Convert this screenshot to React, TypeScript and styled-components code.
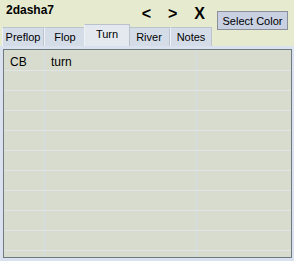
import * as React from 'react';
import styled, { createGlobalStyle } from 'styled-components';

const GlobalStyle = createGlobalStyle`
  html, body {
    margin: 0;
    padding: 0;
    background: #e6ebcf;
  }
`;

const Window = styled.div`
  width: 294px;
  height: 261px;
  display: flex;
  flex-direction: column;
  background: #e6ebcf;
  font-family: "Liberation Sans", Arial, sans-serif;
  font-size: 11px;
  color: #000;
  overflow: hidden;
`;

const Header = styled.div`
  display: grid;
  grid-template-columns: 214px 1fr;
  grid-template-rows: 24px 22px;
`;

const TitleRow = styled.div`
  grid-column: 1;
  grid-row: 1;
  display: flex;
  align-items: flex-start;
  padding: 3px 9px 0 6px;
`;

const Title = styled.div`
  font-size: 12px;
  font-weight: bold;
  line-height: 14px;
`;

const NavGroup = styled.div`
  margin-left: auto;
  display: flex;
  gap: 17px;
  font-size: 16px;
  font-weight: bold;
  line-height: 18px;
  padding-top: 2px;
`;

const NavButton = styled.span`
  cursor: pointer;
`;

const ColorButton = styled.button`
  grid-column: 2;
  grid-row: 1 / 3;
  align-self: start;
  margin: 11px 0 0 3px;
  width: 71px;
  height: 19px;
  padding: 0;
  background: #c8d0e1;
  border: 1px solid #8a8f99;
  font-family: inherit;
  font-size: 11px;
  color: #000;
`;

const TabStrip = styled.div`
  grid-column: 1;
  grid-row: 2;
  display: flex;
  align-items: flex-end;
  padding-left: 2px;
`;

const Tab = styled.div<{ active?: boolean }>`
  position: relative;
  width: ${(p) => (p.active ? 46 : 42)}px;
  height: ${(p) => (p.active ? 22 : 19)}px;
  margin: 0 ${(p) => (p.active ? -2 : 0)}px;
  z-index: ${(p) => (p.active ? 1 : 0)};
  box-sizing: border-box;
  display: flex;
  align-items: center;
  justify-content: center;
  padding-bottom: ${(p) => (p.active ? 3 : 0)}px;
  background: ${(p) => (p.active ? '#e4e9f0' : '#d4dce8')};
  border: 1px solid ${(p) => (p.active ? '#b9c1cc' : '#bcc4d0')};
  border-bottom: none;
  border-left-color: #eef1f5;
`;

const TabPage = styled.div`
  flex: 1;
  display: flex;
  background: #d9e2ee;
  padding: 3px 2px 3px 3px;
  min-height: 0;
`;

const Grid = styled.div`
  flex: 1;
  background: #d8dccf;
  border: 1px solid #707880;
  overflow: hidden;
`;

const Row = styled.div<{ first?: boolean }>`
  display: grid;
  grid-template-columns: 41px 152px 1fr;
  height: ${(p) => (p.first ? 21 : 20)}px;
  box-sizing: border-box;
  border-bottom: 1px solid #dfe4e6;
`;

const Cell = styled.div`
  display: flex;
  align-items: center;
  padding: 3px 0 0 6px;
  font-size: 12px;
  border-right: 1px solid #d5dde6;
  &:last-child {
    border-right: none;
  }
`;

const TABS = ['Preflop', 'Flop', 'Turn', 'River', 'Notes'];
const ACTIVE = 'Turn';

const ROWS: [string, string, string][] = [
  ['CB', 'turn', ''],
  ...Array.from({ length: 10 }, () => ['', '', ''] as [string, string, string]),
];

export default function App(): JSX.Element {
  return (
    <>
      <GlobalStyle />
      <Window>
        <Header>
          <TitleRow>
            <Title>2dasha7</Title>
            <NavGroup>
              <NavButton>&lt;</NavButton>
              <NavButton>&gt;</NavButton>
              <NavButton>X</NavButton>
            </NavGroup>
          </TitleRow>
          <ColorButton>Select Color</ColorButton>
          <TabStrip>
            {TABS.map((t) => (
              <Tab key={t} active={t === ACTIVE}>{t}</Tab>
            ))}
          </TabStrip>
        </Header>
        <TabPage>
          <Grid>
            {ROWS.map((r, i) => (
              <Row key={i} first={i === 0}>
                {r.map((c, j) => <Cell key={j}>{c}</Cell>)}
              </Row>
            ))}
          </Grid>
        </TabPage>
      </Window>
    </>
  );
}
